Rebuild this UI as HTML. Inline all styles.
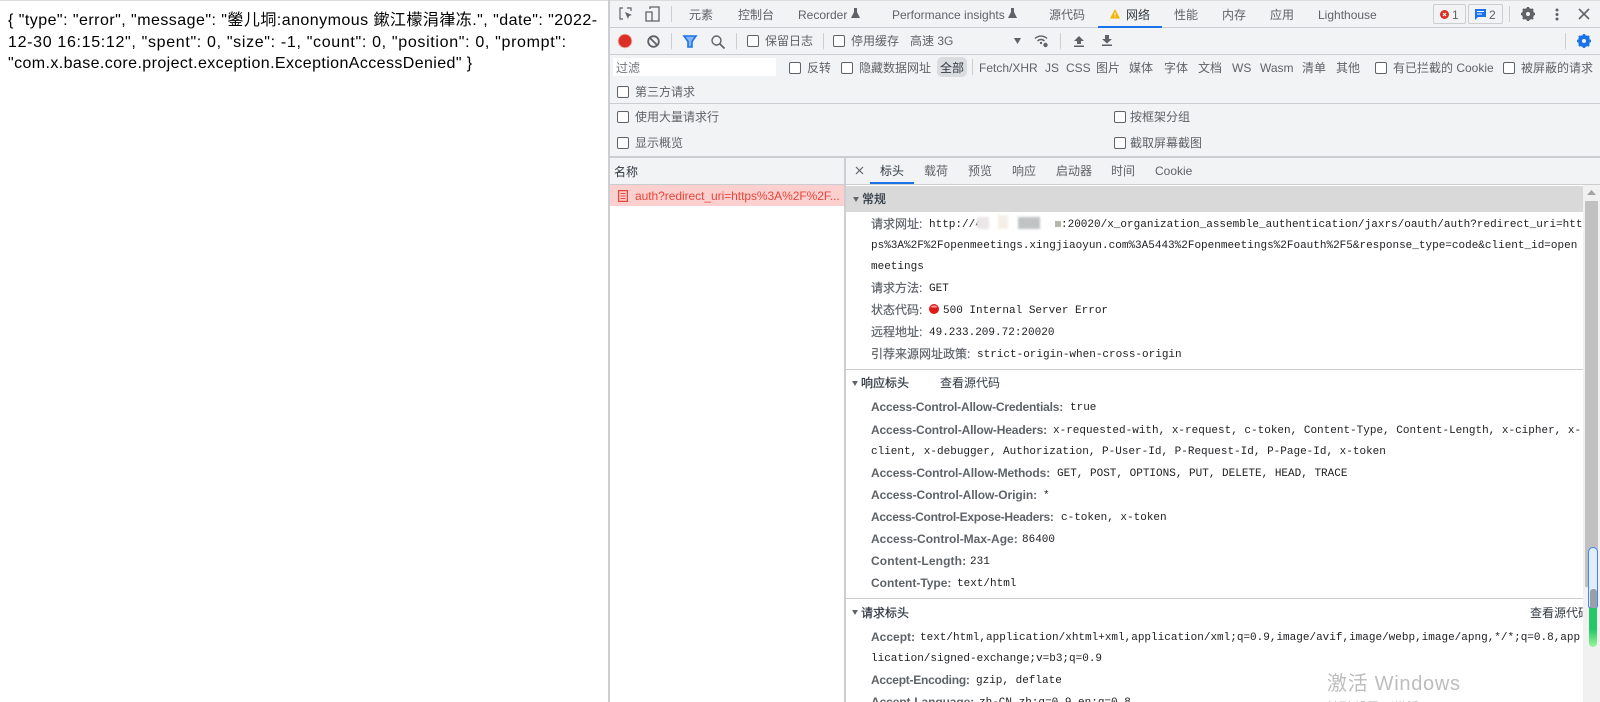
<!DOCTYPE html>
<html lang="zh">
<head>
<meta charset="utf-8">
<title>auth</title>
<style>
*{box-sizing:border-box}
html,body{margin:0;padding:0;width:1600px;height:702px;overflow:hidden;background:#fff}
body{position:relative;font-family:"Liberation Sans","Noto Sans CJK SC",sans-serif;font-size:12px;color:#202124}
.a{position:absolute}
.t{position:absolute;white-space:nowrap;line-height:16px;height:16px;color:#5f6368}
.m{position:absolute;white-space:pre;line-height:16px;height:16px;margin-top:1px;font-family:"Liberation Mono",monospace;font-size:11px;color:#202124}
.k{position:absolute;white-space:nowrap;line-height:16px;height:16px;color:#5f6368;-webkit-text-stroke:.2px #5f6368}
.b{font-weight:bold;-webkit-text-stroke:0}
.hd{-webkit-text-stroke:.25px #303942}
.c{position:absolute;width:12px;height:12px;border:1px solid #5f6368;border-radius:2px;background:#fff}
.s{position:absolute;width:1px;background:#ccced1}
.h{position:absolute;height:1px;background:#cbcdd1}
.body{position:absolute;left:8px;white-space:nowrap;font-size:16px;line-height:20px;color:#000}
svg{position:absolute;overflow:visible}
</style>
</head>
<body>
<div class="a" style="left:0;top:0;width:1600px;height:1px;background:#dcdcdc"></div>

<div class="body" style="top:11px;letter-spacing:.46px">{ "type": "error", "message": "鎣儿垌:anonymous 鏉江檬涓嵂冻.", "date": "2022-</div>
<div class="body" style="top:33px;letter-spacing:.67px">12-30 16:15:12", "spent": 0, "size": -1, "count": 0, "position": 0, "prompt":</div>
<div class="body" style="top:54px;letter-spacing:.4px">"com.x.base.core.project.exception.ExceptionAccessDenied" }</div>

<!-- devtools background -->
<div class="a" style="left:608px;top:1px;width:992px;height:156px;background:#f1f3f4"></div>
<div class="a" style="left:608px;top:0;width:2px;height:702px;background:#ccced1"></div>
<div class="h" style="left:609px;top:27px;width:991px"></div>
<div class="h" style="left:609px;top:54px;width:991px"></div>
<div class="h" style="left:609px;top:103px;width:991px"></div>
<div class="a" style="left:609px;top:156px;width:991px;height:2px;background:#cbcdd1"></div>

<!-- top tabs -->
<svg style="left:619px;top:7px" width="14" height="14" viewBox="0 0 14 14"><path d="M4 1H1v11h3M8 1h4v3" fill="none" stroke="#5f6368" stroke-width="1.200"/><path d="M6 5l7 3-3 1-1 3z" fill="#5f6368"/></svg>
<svg style="left:645px;top:6px" width="15" height="16" viewBox="0 0 15 16"><path d="M5 3V1h9v14H5M1 6h6v9H1z" fill="none" stroke="#5f6368" stroke-width="1.300"/></svg>
<div class="s" style="left:671px;top:6px;height:16px"></div>
<span class="t" style="left:689px;top:7px">元素</span>
<span class="t" style="left:738px;top:7px">控制台</span>
<span class="t" style="left:798px;top:7px">Recorder</span>
<svg style="left:851px;top:8px" width="9" height="11" viewBox="0 0 9 11"><path d="M3 0h3v4l3 6H0l3-6z" fill="#5f6368"/></svg>
<span class="t" style="left:892px;top:7px">Performance insights</span>
<svg style="left:1008px;top:8px" width="9" height="11" viewBox="0 0 9 11"><path d="M3 0h3v4l3 6H0l3-6z" fill="#5f6368"/></svg>
<span class="t" style="left:1049px;top:7px">源代码</span>
<svg style="left:1110px;top:9px" width="10" height="10" viewBox="0 0 10 10"><path d="M5 0l5 9.500H0z" fill="#f4b400"/><path d="M4.500 3.500h1v3h-1zM4.500 7.200h1v1h-1z" fill="#fff"/></svg>
<span class="t" style="left:1126px;top:7px;color:#303942">网络</span>
<div class="a" style="left:1098px;top:26px;width:64px;height:2px;background:#1a73e8"></div>
<span class="t" style="left:1174px;top:7px">性能</span>
<span class="t" style="left:1222px;top:7px">内存</span>
<span class="t" style="left:1270px;top:7px">应用</span>
<span class="t" style="left:1318px;top:7px">Lighthouse</span>
<div class="a" style="left:1433px;top:4px;width:33px;height:20px;border:1px solid #ccced1;border-radius:2px"></div>
<svg style="left:1440px;top:10px" width="9" height="9" viewBox="0 0 9 9"><circle cx="4.500" cy="4.500" r="4.500" fill="#d93025"/><path d="M3 3l3 3M6 3L3 6" stroke="#fff" stroke-width="1"/></svg>
<span class="t" style="left:1452px;top:7px">1</span>
<div class="a" style="left:1468px;top:4px;width:35px;height:20px;border:1px solid #ccced1;border-radius:2px"></div>
<svg style="left:1475px;top:9px" width="11" height="11" viewBox="0 0 11 11"><path d="M0 0h11v8H3l-3 3z" fill="#1a73e8"/><path d="M2 2.500h7M2 5h5" stroke="#fff" stroke-width="1"/></svg>
<span class="t" style="left:1489px;top:7px">2</span>
<div class="s" style="left:1509px;top:6px;height:16px"></div>
<svg style="left:1521px;top:7px" width="14" height="14" viewBox="0 0 14 14"><path d="M7 7m-6 0a6 6 0 1 0 12 0a6 6 0 1 0-12 0zM7 5a2 2 0 1 1 0 4a2 2 0 1 1 0-4z" fill="#5f6368" fill-rule="evenodd"/><path d="M5.800 0h2.400v14H5.800zM0 5.800h14v2.400H0z" fill="#5f6368" opacity="0"/><path d="M7 0v2.500M7 11.500V14M0 7h2.500M11.500 7H14M2 2l1.800 1.800M10.200 10.200L12 12M12 2l-1.800 1.800M3.800 10.200L2 12" stroke="#5f6368" stroke-width="2.400"/></svg>
<svg style="left:1555px;top:8px" width="4" height="13" viewBox="0 0 4 13"><circle cx="2" cy="2" r="1.500" fill="#5f6368"/><circle cx="2" cy="6.500" r="1.500" fill="#5f6368"/><circle cx="2" cy="11" r="1.500" fill="#5f6368"/></svg>
<svg style="left:1579px;top:9px" width="10" height="10" viewBox="0 0 10 10"><path d="M0 0l10 10M10 0L0 10" stroke="#5f6368" stroke-width="1.600"/></svg>

<!-- toolbar -->
<svg style="left:617px;top:33px" width="16" height="16" viewBox="0 0 16 16"><circle cx="8" cy="8" r="7.300" fill="#f0b8b2"/><circle cx="8" cy="8" r="6.400" fill="#dc2f26"/></svg>
<svg style="left:647px;top:35px" width="13" height="13" viewBox="0 0 13 13"><circle cx="6.500" cy="6.500" r="5.300" fill="none" stroke="#5f6368" stroke-width="1.800"/><path d="M2.800 2.800l7.400 7.400" stroke="#5f6368" stroke-width="1.800"/></svg>
<div class="s" style="left:671px;top:33px;height:16px"></div>
<svg style="left:683px;top:35px" width="14" height="13" viewBox="0 0 14 13"><path d="M1 1h12L9 6.500V12H5V6.500z" fill="#8ab4f8" stroke="#1a73e8" stroke-width="1.600"/></svg>
<svg style="left:711px;top:35px" width="14" height="14" viewBox="0 0 14 14"><circle cx="5.500" cy="5.500" r="4.500" fill="none" stroke="#5f6368" stroke-width="1.400"/><path d="M9 9l4.500 4.500" stroke="#5f6368" stroke-width="1.800"/></svg>
<div class="s" style="left:736px;top:33px;height:16px"></div>
<div class="c" style="left:747px;top:35px"></div>
<span class="t" style="left:765px;top:33px">保留日志</span>
<div class="s" style="left:823px;top:33px;height:16px"></div>
<div class="c" style="left:833px;top:35px"></div>
<span class="t" style="left:851px;top:33px">停用缓存</span>
<span class="t" style="left:910px;top:33px">高速 3G</span>
<svg style="left:1014px;top:38px" width="7" height="6" viewBox="0 0 7 6"><path d="M0 0h7L3.500 6z" fill="#5f6368"/></svg>
<svg style="left:1034px;top:34px" width="14" height="14" viewBox="0 0 14 14"><path d="M1 4.500c3.500-3.300 8.500-3.300 12 0M3.500 7c2-2 5-2 7 0" fill="none" stroke="#5f6368" stroke-width="1.400"/><circle cx="7" cy="9" r="1.200" fill="#5f6368"/><circle cx="11.500" cy="11" r="2.200" fill="#5f6368"/></svg>
<div class="s" style="left:1060px;top:33px;height:16px"></div>
<svg style="left:1074px;top:36px" width="10" height="11" viewBox="0 0 10 11"><path d="M5 0l5 5H7v3H3V5H0zM0 9.500h10V11H0z" fill="#5f6368"/></svg>
<svg style="left:1102px;top:35px" width="10" height="11" viewBox="0 0 10 11"><path d="M3 0h4v4h3L5 8.500 0 4h3zM0 9.500h10V11H0z" fill="#5f6368"/></svg>
<div class="s" style="left:1565px;top:33px;height:16px"></div>
<svg style="left:1577px;top:34px" width="14" height="14" viewBox="0 0 14 14"><path d="M7 7m-6 0a6 6 0 1 0 12 0a6 6 0 1 0-12 0zM7 5a2 2 0 1 1 0 4a2 2 0 1 1 0-4z" fill="#1a73e8" fill-rule="evenodd"/><path d="M7 0v2.500M7 11.500V14M0 7h2.500M11.500 7H14M2 2l1.800 1.800M10.200 10.200L12 12M12 2l-1.800 1.800M3.800 10.200L2 12" stroke="#1a73e8" stroke-width="2.400"/></svg>

<!-- filter row -->
<div class="a" style="left:613px;top:58px;width:163px;height:18px;background:#fff"></div>
<span class="t" style="left:616px;top:60px;color:#70757a">过滤</span>
<div class="c" style="left:789px;top:62px"></div>
<span class="t" style="left:807px;top:60px">反转</span>
<div class="c" style="left:841px;top:62px"></div>
<span class="t" style="left:859px;top:60px">隐藏数据网址</span>
<div class="a" style="left:937px;top:57px;width:30px;height:20px;background:#dadce0;border-radius:5px"></div>
<span class="t" style="left:940px;top:60px;color:#303942">全部</span>
<div class="s" style="left:972px;top:59px;height:16px"></div>
<span class="t" style="left:979px;top:60px">Fetch/XHR</span>
<span class="t" style="left:1045px;top:60px">JS</span>
<span class="t" style="left:1066px;top:60px">CSS</span>
<span class="t" style="left:1096px;top:60px">图片</span>
<span class="t" style="left:1129px;top:60px">媒体</span>
<span class="t" style="left:1164px;top:60px">字体</span>
<span class="t" style="left:1198px;top:60px">文档</span>
<span class="t" style="left:1232px;top:60px">WS</span>
<span class="t" style="left:1260px;top:60px">Wasm</span>
<span class="t" style="left:1302px;top:60px">清单</span>
<span class="t" style="left:1336px;top:60px">其他</span>
<div class="c" style="left:1375px;top:62px"></div>
<span class="t" style="left:1393px;top:60px">有已拦截的 Cookie</span>
<div class="c" style="left:1503px;top:62px"></div>
<span class="t" style="left:1521px;top:60px">被屏蔽的请求</span>
<div class="c" style="left:617px;top:86px"></div>
<span class="t" style="left:635px;top:84px">第三方请求</span>

<div class="c" style="left:617px;top:111px"></div>
<span class="t" style="left:635px;top:109px">使用大量请求行</span>
<div class="c" style="left:617px;top:137px"></div>
<span class="t" style="left:635px;top:135px">显示概览</span>
<div class="c" style="left:1114px;top:111px"></div>
<span class="t" style="left:1130px;top:109px">按框架分组</span>
<div class="c" style="left:1114px;top:137px"></div>
<span class="t" style="left:1130px;top:135px">截取屏幕截图</span>

<!-- name column -->
<div class="a" style="left:610px;top:158px;width:234px;height:26px;background:#f1f3f4"></div>
<span class="t" style="left:614px;top:164px;color:#303942">名称</span>
<div class="h" style="left:610px;top:184px;width:234px"></div>
<div class="a" style="left:610px;top:185px;width:234px;height:21px;background:#fdd0d0"></div>
<svg style="left:618px;top:190px" width="10" height="12" viewBox="0 0 10 12"><path d="M.6.600h8.800v10.800H.6z" fill="none" stroke="#e8463a" stroke-width="1.200"/><path d="M2.500 3.500h5M2.500 6h5M2.500 8.500h5" stroke="#e8463a" stroke-width="1"/></svg>
<span class="t" style="left:635px;top:188px;color:#e8463a;letter-spacing:-.05px">auth?redirect_uri=https%3A%2F%2F...</span>
<div class="a" style="left:844px;top:158px;width:2px;height:544px;background:#ccced1"></div>

<!-- detail tabs -->
<div class="a" style="left:846px;top:158px;width:754px;height:27px;background:#f1f3f4"></div>
<div class="h" style="left:846px;top:184px;width:754px"></div>
<svg style="left:856px;top:167px" width="7" height="7" viewBox="0 0 7 7"><path d="M0 0l7 7M7 0L0 7" stroke="#5f6368" stroke-width="1.200"/></svg>
<span class="t" style="left:880px;top:163px;color:#303942">标头</span>
<div class="a" style="left:870px;top:182px;width:44px;height:2px;background:#1a73e8"></div>
<span class="t" style="left:924px;top:163px">载荷</span>
<span class="t" style="left:968px;top:163px">预览</span>
<span class="t" style="left:1012px;top:163px">响应</span>
<span class="t" style="left:1056px;top:163px">启动器</span>
<span class="t" style="left:1111px;top:163px">时间</span>
<span class="t" style="left:1155px;top:163px">Cookie</span>

<!-- general -->
<div class="a" style="left:846px;top:186px;width:737px;height:26px;background:#d9d9d9"></div>
<svg style="left:853px;top:197px" width="6" height="5" viewBox="0 0 7 6"><path d="M0 0h7L3.500 6z" fill="#5f6368"/></svg>
<span class="t hd" style="left:862px;top:191px;color:#303942">常规</span>

<span class="k" style="left:871px;top:216px">请求网址:</span>
<span class="m" style="left:929px;top:216px">http://4</span>
<div class="a" style="left:977px;top:217px;width:12px;height:12px;background:#ebe6e8;filter:blur(1px)"></div>
<div class="a" style="left:998px;top:215px;width:10px;height:14px;background:#f5eee6;filter:blur(1px)"></div>
<div class="a" style="left:1018px;top:217px;width:22px;height:12px;background:#c0c3c4;filter:blur(1px)"></div>
<div class="a" style="left:1055px;top:221px;width:6px;height:6px;background:#b5b5a8"></div>
<span class="m" style="left:1061px;top:216px">:20020/x_organization_assemble_authentication/jaxrs/oauth/auth?redirect_uri=htt</span>
<span class="m" style="left:871px;top:237px">ps%3A%2F%2Fopenmeetings.xingjiaoyun.com%3A5443%2Fopenmeetings%2Foauth%2F5&amp;response_type=code&amp;client_id=open</span>
<span class="m" style="left:871px;top:258px">meetings</span>
<span class="k" style="left:871px;top:280px">请求方法:</span><span class="m" style="left:929px;top:280px">GET</span>
<span class="k" style="left:871px;top:302px">状态代码:</span>
<svg style="left:929px;top:304px" width="10" height="10" viewBox="0 0 10 10"><circle cx="5" cy="5" r="5" fill="#e0191b"/><path d="M1.500 3c1-2 6-2 7 0-2 .8-5 .8-7 0z" fill="#f8a0a0"/></svg>
<span class="m" style="left:943px;top:302px">500 Internal Server Error</span>
<span class="k" style="left:871px;top:324px">远程地址:</span><span class="m" style="left:929px;top:324px">49.233.209.72:20020</span>
<span class="k" style="left:871px;top:346px">引荐来源网址政策:</span><span class="m" style="left:977px;top:346px">strict-origin-when-cross-origin</span>
<div class="h" style="left:846px;top:369px;width:737px"></div>

<!-- response headers -->
<svg style="left:852px;top:381px" width="6" height="5" viewBox="0 0 7 6"><path d="M0 0h7L3.500 6z" fill="#5f6368"/></svg>
<span class="t hd" style="left:861px;top:375px;color:#303942">响应标头</span>
<span class="t" style="left:940px;top:375px;color:#303942">查看源代码</span>
<span class="k b" style="left:871px;top:399px;letter-spacing:-.18px">Access-Control-Allow-Credentials:</span><span class="m" style="left:1070px;top:399px">true</span>
<span class="k b" style="left:871px;top:422px;letter-spacing:-.14px">Access-Control-Allow-Headers:</span><span class="m" style="left:1053px;top:422px">x-requested-with, x-request, c-token, Content-Type, Content-Length, x-cipher, x-</span>
<span class="m" style="left:871px;top:443px">client, x-debugger, Authorization, P-User-Id, P-Request-Id, P-Page-Id, x-token</span>
<span class="k b" style="left:871px;top:465px;letter-spacing:-.1px">Access-Control-Allow-Methods:</span><span class="m" style="left:1057px;top:465px">GET, POST, OPTIONS, PUT, DELETE, HEAD, TRACE</span>
<span class="k b" style="left:871px;top:487px;letter-spacing:-.07px">Access-Control-Allow-Origin:</span><span class="m" style="left:1043px;top:487px">*</span>
<span class="k b" style="left:871px;top:509px;letter-spacing:-.27px">Access-Control-Expose-Headers:</span><span class="m" style="left:1061px;top:509px">c-token, x-token</span>
<span class="k b" style="left:871px;top:531px">Access-Control-Max-Age:</span><span class="m" style="left:1022px;top:531px">86400</span>
<span class="k b" style="left:871px;top:553px;letter-spacing:.13px">Content-Length:</span><span class="m" style="left:970px;top:553px">231</span>
<span class="k b" style="left:871px;top:575px">Content-Type:</span><span class="m" style="left:957px;top:575px">text/html</span>
<div class="h" style="left:846px;top:598px;width:737px"></div>

<!-- request headers -->
<svg style="left:852px;top:610px" width="6" height="5" viewBox="0 0 7 6"><path d="M0 0h7L3.500 6z" fill="#5f6368"/></svg>
<span class="t hd" style="left:861px;top:605px;color:#303942">请求标头</span>
<span class="t" style="left:1530px;top:605px;color:#303942;width:53px;overflow:hidden">查看源代码</span>
<span class="k b" style="left:871px;top:629px">Accept:</span><span class="m" style="left:920px;top:629px">text/html,application/xhtml+xml,application/xml;q=0.9,image/avif,image/webp,image/apng,*/*;q=0.8,app</span>
<span class="m" style="left:871px;top:650px">lication/signed-exchange;v=b3;q=0.9</span>
<span class="k b" style="left:871px;top:672px;letter-spacing:-.25px">Accept-Encoding:</span><span class="m" style="left:976px;top:672px">gzip, deflate</span>
<span class="k b" style="left:871px;top:694px;letter-spacing:-.1px">Accept-Language:</span><span class="m" style="left:979px;top:694px">zh-CN,zh;q=0.9,en;q=0.8</span>

<!-- scrollbar -->
<div class="a" style="left:1583px;top:185px;width:17px;height:517px;background:#f1f1f1"></div>
<svg style="left:1587px;top:190px" width="9" height="5" viewBox="0 0 9 5"><path d="M4.500 0L9 5H0z" fill="#a3a3a3"/></svg>
<div class="a" style="left:1585px;top:201px;width:13px;height:386px;background:#c1c1c1"></div>
<div class="a" style="left:1588px;top:547px;width:10px;height:61px;background:#e3ecfb;border:1px solid #4285f4;border-radius:5px 5px 2px 2px"></div>
<div class="a" style="left:1590px;top:589px;width:7px;height:20px;background:#9aa0a6;border-radius:3px"></div>
<div class="a" style="left:1589px;top:608px;width:8px;height:39px;border-radius:0 0 4px 4px;background:linear-gradient(#24c768 0%,#24c768 55%,#9cf59c 100%)"></div>

<!-- watermark -->
<span class="a" style="left:1327px;top:671px;font-size:20px;line-height:26px;color:#bdbdbd;white-space:nowrap;letter-spacing:.7px">激活 Windows</span>
<span class="a" style="left:1327px;top:699px;font-size:12px;line-height:16px;color:#bdbdbd;white-space:nowrap">转到“设置”以激活 Windows。</span>
</body>
</html>
